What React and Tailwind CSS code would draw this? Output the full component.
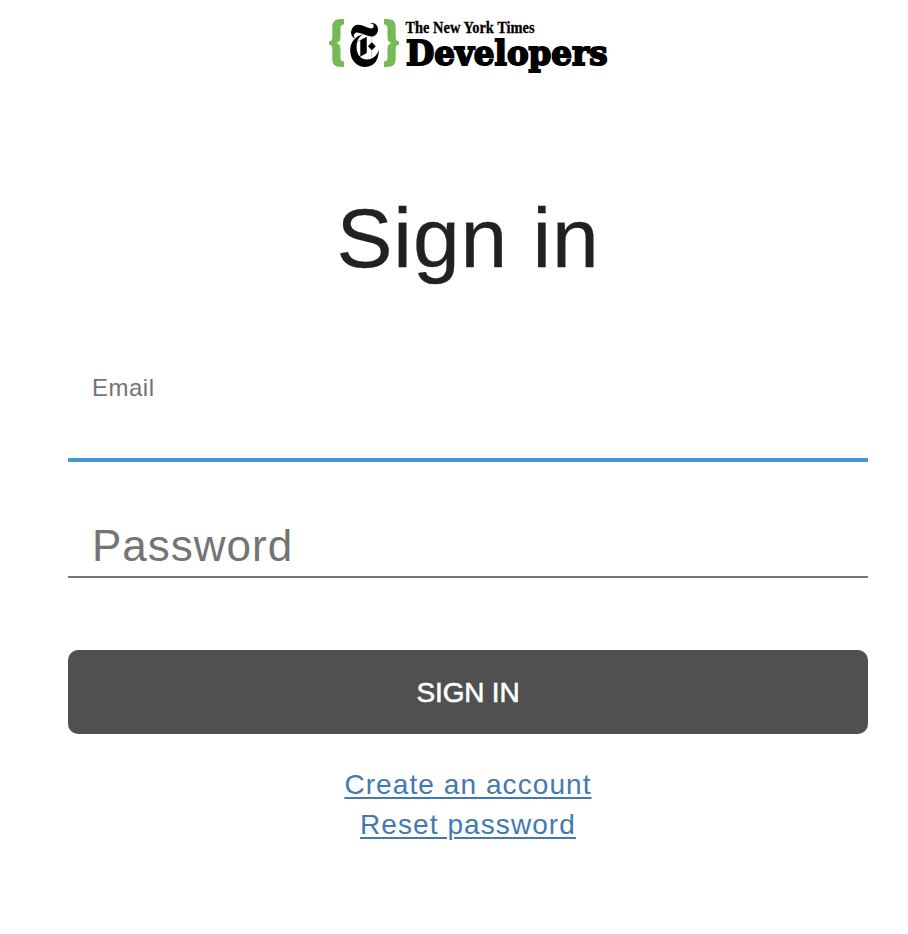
import { SiNewyorktimes } from "react-icons/si";

const brace =
  "M15 0 V5.6 C12.3 5.8 11.5 6.8 11.5 9.6 V18 C11.5 21.4 10.4 23.2 7.4 24 C10.4 24.8 11.5 26.6 11.5 30 V38.4 C11.5 41.2 12.3 42.2 15 42.4 V48 H11.5 C5.8 48 3.3 45.2 3.3 39.8 V30.6 C3.3 27.2 2.4 25.8 0 25.6 V22.4 C2.4 22.2 3.3 20.8 3.3 17.4 V8.2 C3.3 2.8 5.8 0 11.5 0 Z";

function Logo() {
  return (
    <header className="flex h-[66px] w-[280px] items-start pl-px">
      <svg className="mt-[0.6px] h-[48px] w-[15px] shrink-0" viewBox="0 0 15 48" fill="#76ba55">
        <path d={brace} />
      </svg>
      <SiNewyorktimes preserveAspectRatio="none" className="ml-[1.5px] mt-[4.5px] h-[44px] w-[37px] shrink-0 text-black" />
      <svg className="ml-[1.5px] mt-[0.6px] h-[48px] w-[15px] shrink-0 -scale-x-100" viewBox="0 0 15 48" fill="#76ba55">
        <path d={brace} />
      </svg>
      <svg className="ml-[5px] h-[66px] w-[208px] shrink-0" viewBox="0 0 208 66" fill="#000">
        <text x="1.5" y="14.5" textLength="129" lengthAdjust="spacingAndGlyphs" fontSize="16" fontWeight="700" fontFamily="'Liberation Serif', serif" stroke="#000" strokeWidth="0.3">
          The New York Times
        </text>
        <text x="2" y="47.2" textLength="201.5" lengthAdjust="spacingAndGlyphs" fontSize="33" fontWeight="700" fontFamily="'DejaVu Serif', serif" stroke="#000" strokeWidth="1.9">
          Developers
        </text>
      </svg>
    </header>
  );
}

export default function App() {
  return (
    <main className="flex h-[934px] w-[908px] flex-col items-center bg-white pl-[68px] pr-[40px] pt-[18px] font-['Liberation_Sans',Arial,sans-serif]">
      <Logo />
      <h1 className="mt-[106px] text-[84px] leading-[96px] tracking-[0.9px] text-[#212121] [-webkit-text-stroke:0.3px_#212121]">Sign in</h1>
      <form className="flex w-full flex-col" onSubmit={(e) => e.preventDefault()}>
        <label className="mt-[64px] flex h-[112px] items-start border-b-4 border-[#4499d0] px-6 pt-[23px] text-[24px] leading-[30px] tracking-[0.5px] text-[#747474]">
          Email
        </label>
        <label className="mt-[36px] flex h-[80px] items-end border-b-2 border-[#747474] px-6 pb-[6px] text-[44px] leading-[48px] tracking-[1px] text-[#747474]">
          Password
        </label>
        <button className="mt-[72px] h-[84px] rounded-[10px] bg-[#505050] pt-[2px] text-[28px] leading-[32px] tracking-[-0.2px] text-white [-webkit-text-stroke:0.6px_white]">
          SIGN IN
        </button>
      </form>
      <nav className="mt-[31px] flex flex-col items-center text-[28px] leading-[40px] tracking-[1.08px] text-[#4279b5]">
        <a href="#" className="underline decoration-2 underline-offset-[3px]">Create an account</a>
        <a href="#" className="underline decoration-2 underline-offset-[3px]">Reset password</a>
      </nav>
    </main>
  );
}
